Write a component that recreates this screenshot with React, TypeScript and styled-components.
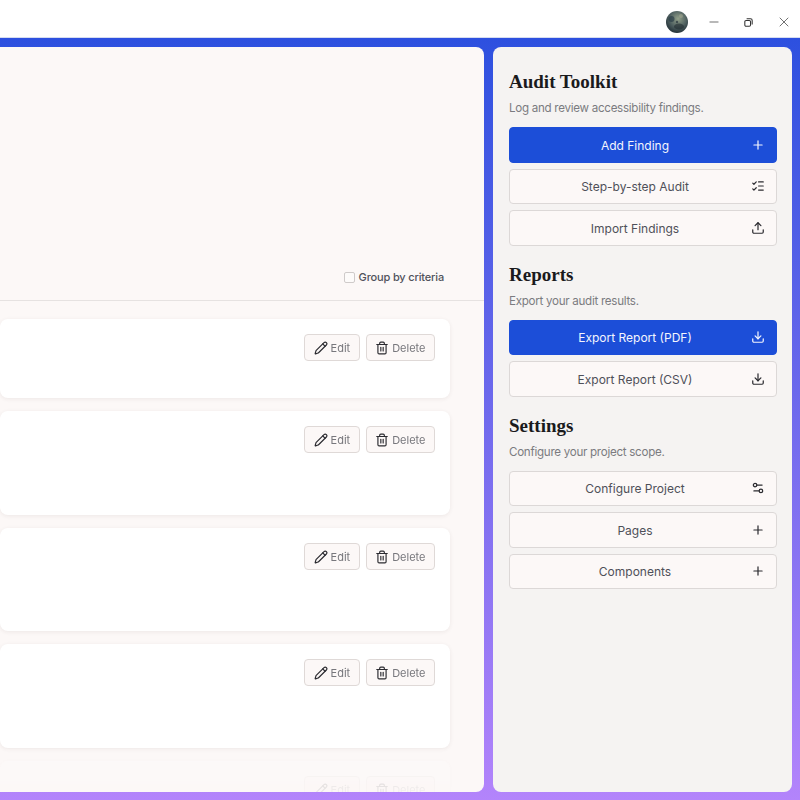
import React from "react";
import styled, { createGlobalStyle } from "styled-components";
import { Plus, ListChecks, Upload, Download, Settings2, Pencil, Trash2, Minus, X } from "lucide-react";

const Global = createGlobalStyle`
  html, body { margin: 0; padding: 0; height: 100%; overflow: hidden; }
  body { font-family: "Inter", "Noto Sans", sans-serif; }
  #root { height: 100%; }
`;

const Shell = styled.div`
  width: 800px;
  height: 800px;
  display: flex;
  flex-direction: column;
  overflow: hidden;
`;

const TitleBar = styled.header`
  height: 37px;
  flex: none;
  background: #ffffff;
  border-bottom: 1px solid #d5dcf0;
  display: flex;
  align-items: center;
  justify-content: flex-end;
  margin-right: -1px;
`;

const Avatar = styled.svg`
  width: 22px;
  height: 22px;
  margin-right: 8px;
  margin-top: 7px;
`;

const WinButton = styled.button`
  width: 35px;
  height: 37px;
  margin-top: 7px;
  border: 0;
  padding: 0;
  background: none;
  color: #333;
  display: flex;
  align-items: center;
  justify-content: center;
`;

const Stage = styled.main`
  flex: 1;
  min-height: 0;
  display: flex;
  gap: 9px;
  padding: 9px 8px 8px 0;
  background: linear-gradient(180deg, #2d50df 0%, #b384fb 100%);
`;

const MainPanel = styled.section`
  flex: 1;
  min-width: 0;
  margin-left: -12px;
  background: #fcf8f7;
  border-radius: 8px;
  display: flex;
  flex-direction: column;
  overflow: hidden;
`;

const FilterArea = styled.div`
  height: 254px;
  flex: none;
  box-sizing: border-box;
  border-bottom: 1px solid #e6e2e1;
  display: flex;
  align-items: flex-end;
  justify-content: flex-end;
  padding: 0 40px 16px 0;
`;

const GroupLabel = styled.label`
  display: flex;
  align-items: center;
  gap: 4px;
  font-size: 11px;
  letter-spacing: -0.16px;
  font-weight: 500;
  color: #50525b;
`;

const CheckBox = styled.span`
  width: 9px;
  height: 9px;
  border: 1px solid #cfcbca;
  border-radius: 2px;
  background: #fdfbfa;
`;

const FindingList = styled.div`
  flex: 1;
  min-height: 0;
  overflow: hidden;
  padding: 18px 34px 0 12px;
  display: flex;
  flex-direction: column;
  gap: 13px;
  mask-image: linear-gradient(180deg, #000 calc(100% - 44px), rgba(0, 0, 0, 0.2) calc(100% - 30px), rgba(0, 0, 0, 0.08) 100%);
`;

const FindingCard = styled.article<{ $height: number }>`
  height: ${({ $height }) => $height}px;
  flex: none;
  box-sizing: border-box;
  background: #ffffff;
  border-radius: 8px;
  box-shadow: 0 1px 4px rgba(60, 40, 40, 0.08);
  padding: 15px;
  display: flex;
  justify-content: flex-end;
  align-items: flex-start;
  gap: 6px;
`;

const SmallButton = styled.button`
  height: 27px;
  box-sizing: border-box;
  padding: 0 8.5px;
  display: flex;
  align-items: center;
  gap: 3px;
  background: #fcf8f7;
  border: 1px solid #dfd9d7;
  border-radius: 4px;
  font: 400 11px "Inter", sans-serif;
  color: #77777c;
  svg { color: #2b2b30; }
`;

const Sidebar = styled.aside`
  width: 299px;
  flex: none;
  box-sizing: border-box;
  background: #f5f3f2;
  border-radius: 8px;
  padding: 23px 15px 0 16px;
  display: flex;
  flex-direction: column;
`;

const Section = styled.div`
  display: flex;
  flex-direction: column;
  margin-bottom: 17px;
`;

const Heading = styled.h2`
  margin: 0;
  font: 700 19px/24px "Liberation Serif", serif;
  color: #1a1a1c;
`;

const Sub = styled.p`
  margin: 5px 0 10px;
  font-size: 11.6px;
  letter-spacing: -0.28px;
  line-height: 18px;
  color: #7b7b80;
`;

const Actions = styled.div`
  display: flex;
  flex-direction: column;
  gap: 6px;
`;

const ActionButton = styled.button<{ $primary?: boolean }>`
  height: 35.5px;
  box-sizing: border-box;
  display: grid;
  grid-template-columns: 1fr 14px;
  align-items: center;
  padding: 0 11px 0 0;
  border-radius: 4px;
  border: 1px solid ${({ $primary }) => ($primary ? "#1c4ed8" : "#dcd8d7")};
  background: ${({ $primary }) => ($primary ? "#1c4ed8" : "#fcf8f7")};
  color: ${({ $primary }) => ($primary ? "#f4f5fd" : "#4f5059")};
  font: 400 12px "Inter", sans-serif;
  text-align: center;
`;

const ButtonLabel = styled.span`
  text-align: center;
  margin-right: -9px;
  padding-top: 1px;
`;

const ActionIcon = styled.span<{ $primary?: boolean }>`
  display: flex;
  color: ${({ $primary }) => ($primary ? "#f4f5fd" : "#2b2b30")};
`;

const toolkit = [
  { label: "Add Finding", Icon: Plus, primary: true },
  { label: "Step-by-step Audit", Icon: ListChecks },
  { label: "Import Findings", Icon: Upload },
];
const reports = [
  { label: "Export Report (PDF)", Icon: Download, primary: true },
  { label: "Export Report (CSV)", Icon: Download },
];
const settings = [
  { label: "Configure Project", Icon: Settings2 },
  { label: "Pages", Icon: Plus },
  { label: "Components", Icon: Plus },
];
const cardHeights = [79, 104, 103, 104, 104];

type ActionItem = { label: string; Icon: typeof Plus; primary?: boolean };

function ActionGroup({ title, text, items }: { title: string; text: string; items: ActionItem[] }) {
  return (
    <Section>
      <Heading>{title}</Heading>
      <Sub>{text}</Sub>
      <Actions>
        {items.map(({ label, Icon, primary }) => (
          <ActionButton key={label} $primary={primary}>
            <ButtonLabel>{label}</ButtonLabel>
            <ActionIcon $primary={primary}>
              <Icon size={14} strokeWidth={2.1} />
            </ActionIcon>
          </ActionButton>
        ))}
      </Actions>
    </Section>
  );
}

export default function App() {
  return (
    <Shell>
      <Global />
      <TitleBar>
        <Avatar viewBox="0 0 22 22">
          <defs>
            <radialGradient id="av" cx="0.55" cy="0.35" r="0.7">
              <stop offset="0" stopColor="#93a18a" />
              <stop offset="0.55" stopColor="#4f6060" />
              <stop offset="1" stopColor="#1d2a32" />
            </radialGradient>
          </defs>
          <circle cx="11" cy="11" r="11" fill="url(#av)" />
          <circle cx="5.5" cy="8" r="3" fill="#2c3f48" opacity="0.7" />
          <ellipse cx="13" cy="15.5" rx="5" ry="3" fill="#222c30" opacity="0.6" />
          <circle cx="15" cy="5" r="2" fill="#a9ad95" opacity="0.5" />
          <circle cx="11" cy="11" r="1.2" fill="#26323a" opacity="0.7" />
        </Avatar>
        <WinButton aria-label="Minimize"><Minus size={14} strokeWidth={1.2} /></WinButton>
        <WinButton aria-label="Restore">
          <svg width="9" height="9" viewBox="0 0 11 11" fill="none" stroke="currentColor" strokeWidth="1.3">
            <rect x="1" y="3" width="7" height="7" rx="1.5" />
            <path d="M3.2 1h4.8a2 2 0 0 1 2 2v4.8" />
          </svg>
        </WinButton>
        <WinButton aria-label="Close"><X size={16} strokeWidth={1.05} /></WinButton>
      </TitleBar>
      <Stage>
        <MainPanel>
          <FilterArea>
            <GroupLabel><CheckBox />Group by criteria</GroupLabel>
          </FilterArea>
          <FindingList>
            {cardHeights.map((h, i) => (
              <FindingCard key={i} $height={h}>
                <SmallButton><Pencil size={14} />Edit</SmallButton>
                <SmallButton><Trash2 size={14} />Delete</SmallButton>
              </FindingCard>
            ))}
          </FindingList>
        </MainPanel>
        <Sidebar>
          <ActionGroup title="Audit Toolkit" text="Log and review accessibility findings." items={toolkit} />
          <ActionGroup title="Reports" text="Export your audit results." items={reports} />
          <ActionGroup title="Settings" text="Configure your project scope." items={settings} />
        </Sidebar>
      </Stage>
    </Shell>
  );
}
